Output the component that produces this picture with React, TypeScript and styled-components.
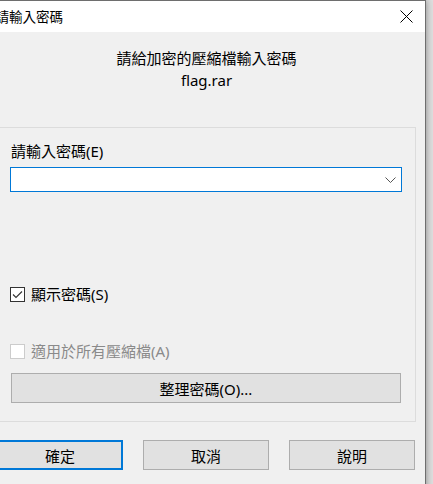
import React from 'react';
import styled, { createGlobalStyle } from 'styled-components';

const Global = createGlobalStyle`
  html, body {
    margin: 0;
    padding: 0;
    width: 433px;
    height: 484px;
    overflow: hidden;
    background: #dedede;
  }
  #root { height: 484px; }
  * { box-sizing: border-box; }
`;

const Desktop = styled.div`
  width: 433px;
  height: 484px;
  overflow: hidden;
  display: flex;
  align-items: flex-start;
`;

const Window = styled.div`
  flex: none;
  margin-left: -14px;
  width: 440px;
  height: 520px;
  border: 1px solid #6e6e6e;
  background: #f0f0f0;
  box-shadow: 0 0 7px rgba(0, 0, 0, 0.4);
  display: flex;
  flex-direction: column;
  font-family: "Noto Sans", "Noto Sans CJK TC", sans-serif;
  font-size: 15px;
  color: #000;
`;

const TitleBar = styled.div`
  height: 31px;
  background: #fff;
  display: flex;
  align-items: center;
  justify-content: space-between;
  padding-left: 8.5px;
`;

const TitleText = styled.div`
  font-size: 13.5px;
  line-height: 20px;
  margin-top: 1px;
`;

const CloseBtn = styled.div`
  width: 38px;
  height: 31px;
  display: flex;
  align-items: center;
  justify-content: center;
`;

const Body = styled.div`
  flex: 1;
  display: flex;
  flex-direction: column;
  padding: 15px 9px 0 10px;
`;

const Header = styled.div`
  text-align: center;
  line-height: 22px;
`;

const GroupBox = styled.div`
  margin-top: 36px;
  border: 1px solid #dcdcdc;
  padding: 13px 13px 18px 12px;
  display: flex;
  flex-direction: column;
`;

const Label = styled.div`
  line-height: 20px;
  margin-left: 1px;
`;

const Combo = styled.div`
  margin-top: 6px;
  height: 25px;
  background: #fff;
  border: 1px solid #0078d7;
  display: flex;
  align-items: center;
  justify-content: flex-end;
  padding-right: 5px;
`;

const CheckRow = styled.div<{ $gap: number; $disabled?: boolean }>`
  margin-top: ${(p) => p.$gap}px;
  display: flex;
  align-items: center;
  gap: 6px;
  height: 20px;
  line-height: 20px;
  color: ${(p) => (p.$disabled ? '#8a8a8a' : '#000')};
`;

const Box = styled.div<{ $disabled?: boolean }>`
  width: 15px;
  height: 15px;
  flex: none;
  background: #fff;
  border: 1px solid ${(p) => (p.$disabled ? '#cccccc' : '#333333')};
  display: flex;
  align-items: center;
  justify-content: center;
`;

const Button = styled.div<{ $default?: boolean }>`
  height: 30px;
  background: #e1e1e1;
  border: ${(p) => (p.$default ? '2px solid #0078d7' : '1px solid #adadad')};
  display: flex;
  align-items: center;
  justify-content: center;
  line-height: 20px;
  padding-top: 1px;
`;

const WideButton = styled(Button)`
  margin: 12px 1px 0 1px;
`;

const ButtonRow = styled.div`
  margin-top: 18px;
  display: flex;
  gap: 20px;
  & > div {
    width: 126px;
  }
`;

export default function App() {
  return (
    <>
      <Global />
      <Desktop>
        <Window>
          <TitleBar>
            <TitleText>請輸入密碼</TitleText>
            <CloseBtn>
              <svg width="13" height="13" viewBox="0 0 13 13">
                <path d="M0.5 0.5 L12.5 12.5 M12.5 0.5 L0.5 12.5" stroke="#000" strokeWidth="1" fill="none" />
              </svg>
            </CloseBtn>
          </TitleBar>
          <Body>
            <Header>
              請給加密的壓縮檔輸入密碼
              <br />
              flag.rar
            </Header>
            <GroupBox>
              <Label>請輸入密碼(E)</Label>
              <Combo>
                <svg width="11" height="6" viewBox="0 0 11 6">
                  <path d="M0.5 0.5 L5.5 5.5 L10.5 0.5" stroke="#555" strokeWidth="1" fill="none" />
                </svg>
              </Combo>
              <CheckRow $gap={92}>
                <Box>
                  <svg width="11" height="9" viewBox="0 0 11 9">
                    <path d="M1 4.5 L4 7.5 L10 1.5" stroke="#333" strokeWidth="1.1" fill="none" />
                  </svg>
                </Box>
                <span>顯示密碼(S)</span>
              </CheckRow>
              <CheckRow $gap={37} $disabled>
                <Box $disabled />
                <span>適用於所有壓縮檔(A)</span>
              </CheckRow>
              <WideButton>整理密碼(O)...</WideButton>
            </GroupBox>
            <ButtonRow>
              <Button $default>確定</Button>
              <Button>取消</Button>
              <Button>說明</Button>
            </ButtonRow>
          </Body>
        </Window>
      </Desktop>
    </>
  );
}
